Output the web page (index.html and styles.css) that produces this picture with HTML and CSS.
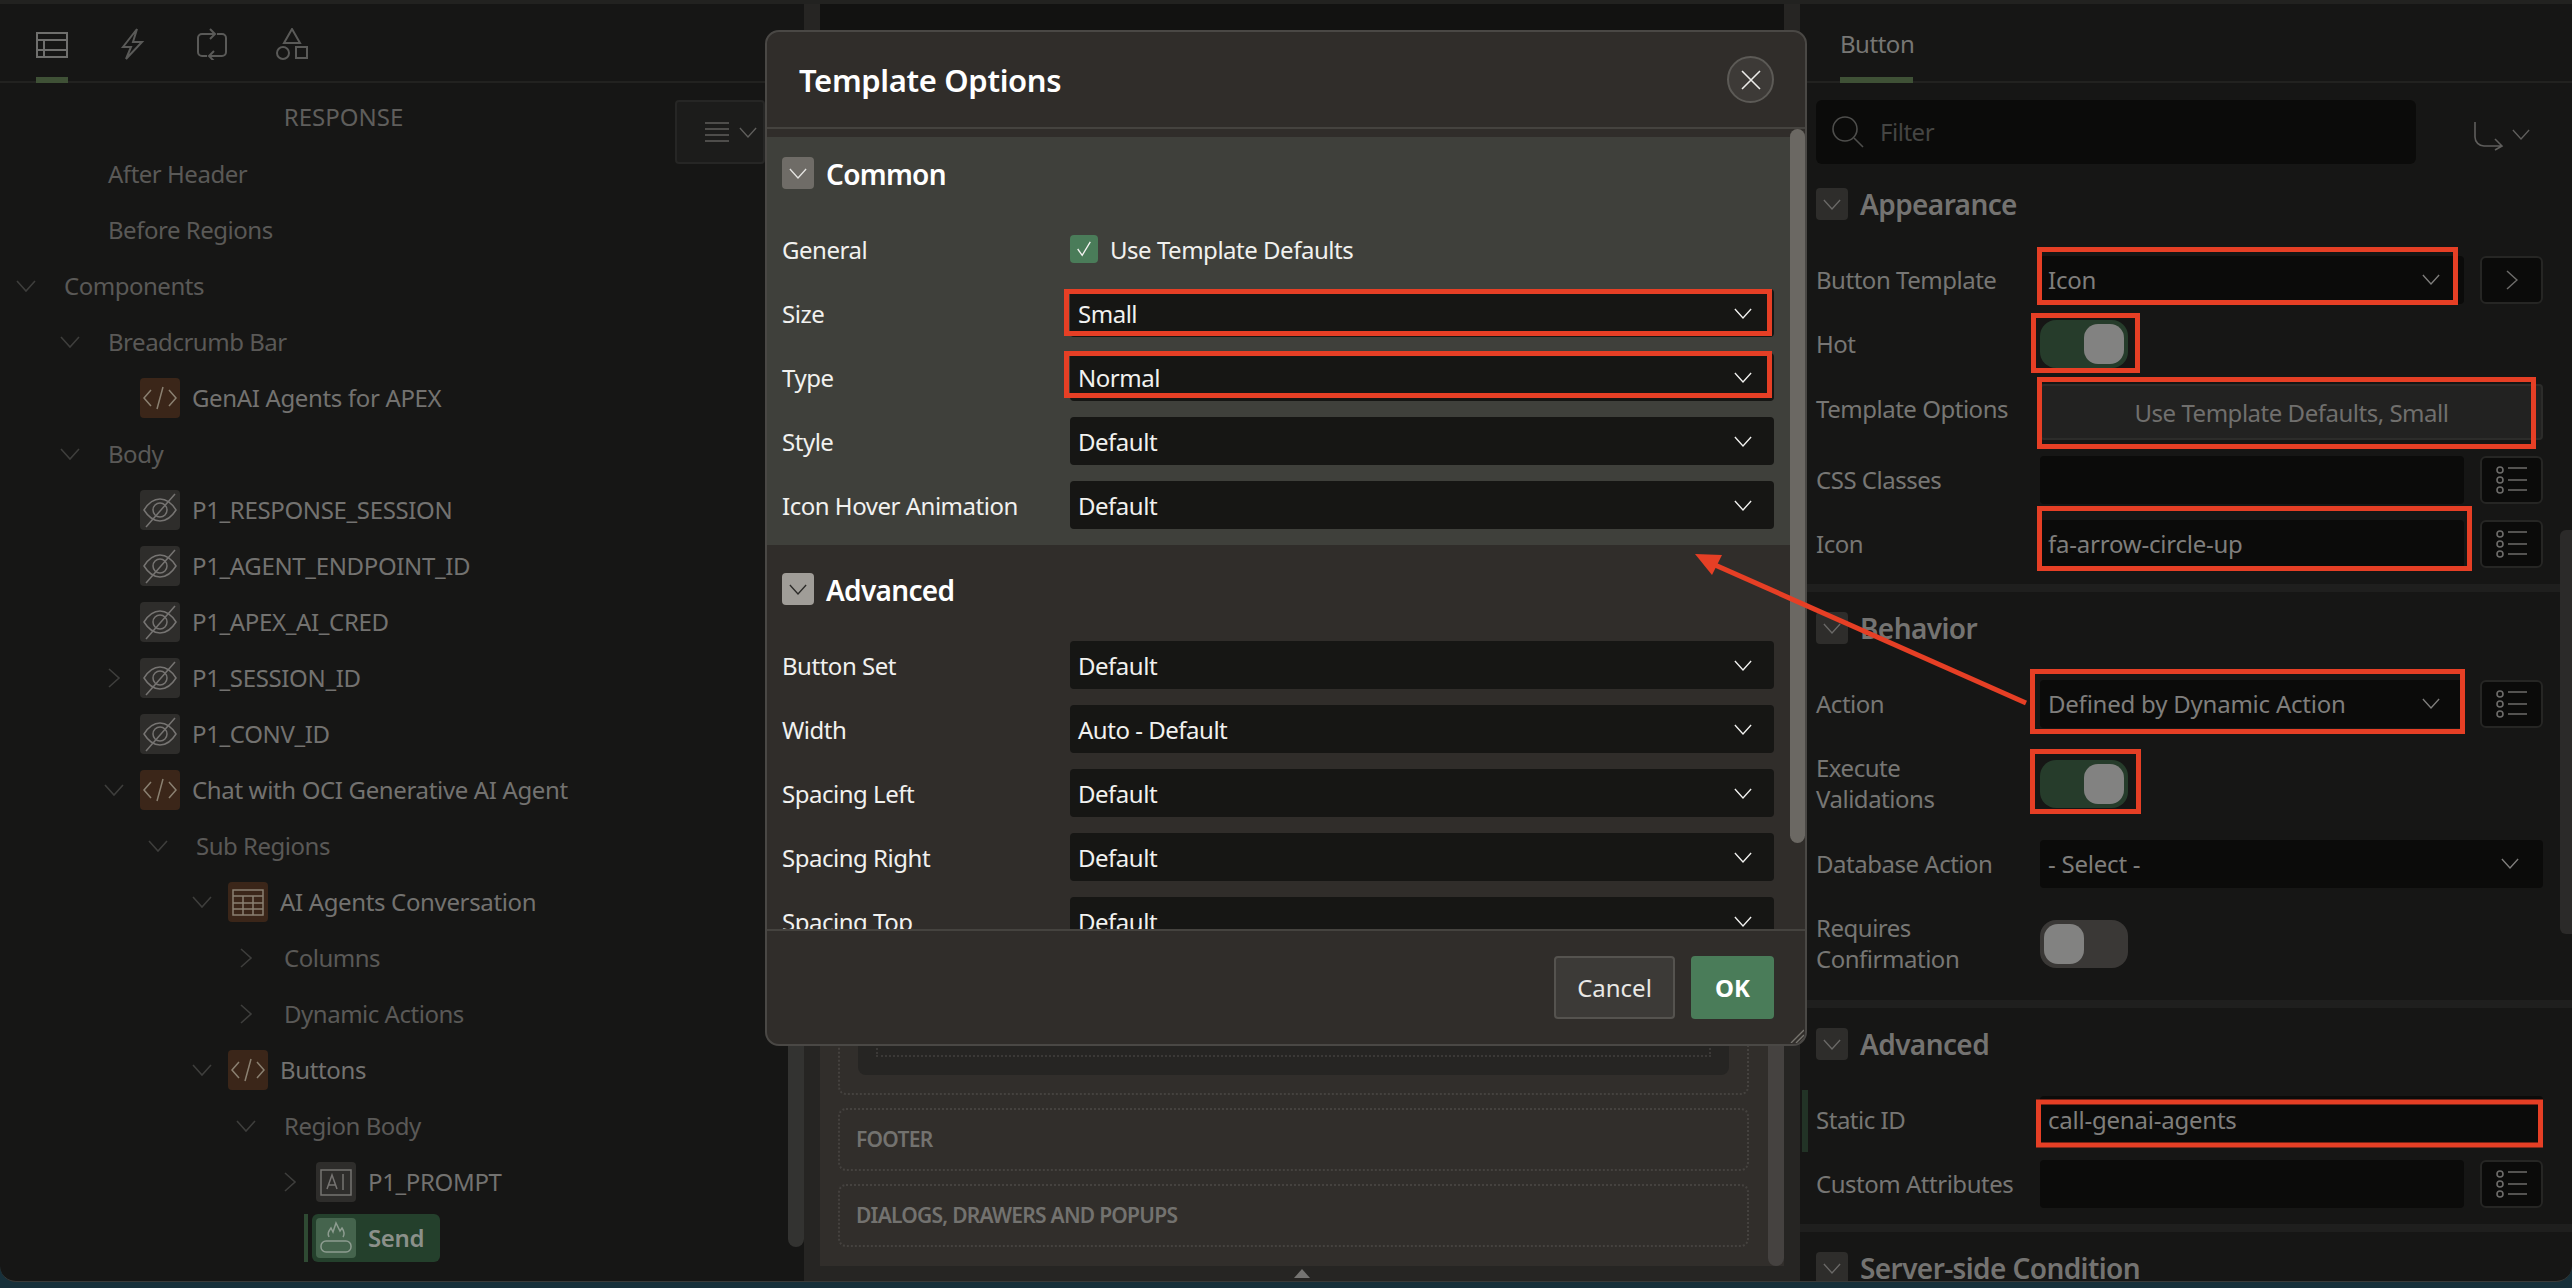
FILE: index.html
```html
<!DOCTYPE html>
<html lang="en">
<head>
    <meta charset="UTF-8">
    <meta name="viewport" content="width=device-width, initial-scale=1.0">
    <title>Template Options</title>
    <link rel="stylesheet" href="styles.css">
</head>
<body>
    <svg class="defs" width="0" height="0">
        <symbol id="chev-d" viewBox="0 0 20 12"><path d="M1 1l9 10 9-10"/></symbol>
        <symbol id="chev-r" viewBox="0 0 12 20"><path d="M1 1l10 9-10 9"/></symbol>
        <symbol id="i-code" viewBox="0 0 40 40"><path d="M11 12l-7 8 7 8M29 12l7 8-7 8M23 9l-6 22"/></symbol>
        <symbol id="i-eye" viewBox="0 0 40 40"><path d="M4 20c5-8 10-11 16-11s11 3 16 11c-5 8-10 11-16 11S9 28 4 20z"/><circle cx="20" cy="20" r="7"/><path d="M6 37L35 4"/></symbol>
        <symbol id="i-table" viewBox="0 0 40 40"><path d="M5 8h30v25H5zM5 14h30M5 21h30M5 27h30M15 14v19M25 14v19"/></symbol>
        <symbol id="i-prompt" viewBox="0 0 40 40"><path d="M5 8h30v25H5zM11 27l5-14 5 14M13 23h6M27 12v16"/></symbol>
        <symbol id="i-send" viewBox="0 0 40 40"><rect x="5" y="23" width="30" height="11" rx="5"/><path d="M13 19c-2-4 0-6 2-9l2 4 3-9 4 8 2-3c2 3 3 6 1 9"/></symbol>
        <symbol id="i-list" viewBox="0 0 32 32"><circle cx="4" cy="6" r="3"/><circle cx="4" cy="16" r="3"/><circle cx="4" cy="26" r="3"/><path d="M12 4h19M12 16h19M12 26h19"/></symbol>
    </svg>

    <div class="window">
        <!-- tree -->
        <div class="left">
            <div class="tabs">
                <div class="tab active">
                    <svg class="tab-icon" viewBox="0 0 32 32"><path d="M1 5h30v24H1zM1 12h30M1 22h30M8 12v17"/></svg>
                </div>
                <div class="tab">
                    <svg class="tab-icon" viewBox="0 0 32 32"><path d="M21 1L7 19h8l-5 12 16-17h-9z"/></svg>
                </div>
                <div class="tab">
                    <svg class="tab-icon" viewBox="0 0 32 32"><path d="M11 28H6a4 4 0 0 1-4-4V10a4 4 0 0 1 4-4h12M14 1l5 5-5 5M21 6h5a4 4 0 0 1 4 4v14a4 4 0 0 1-4 4H14M18 23l-5 5 5 5"/></svg>
                </div>
                <div class="tab">
                    <svg class="tab-icon" viewBox="0 0 32 32"><path d="M16 1l8 14H8zM20 19h11v11H20z"/><circle cx="7" cy="25" r="6"/></svg>
                </div>
            </div>
            <div class="tree">
                <div class="tree-head">
                    <span class="tree-title">RESPONSE</span>
                    <div class="menu-btn">
                        <svg class="menu-lines" viewBox="0 0 24 24"><path d="M0 3h24M0 9h24M0 15h24M0 21h24"/></svg>
                        <svg class="chev"><use href="#chev-d"/></svg>
                    </div>
                </div>
                <div class="row lvl-1"><span class="caret"></span><span class="group">After Header</span></div>
                <div class="row lvl-1"><span class="caret"></span><span class="group">Before Regions</span></div>
                <div class="row lvl-0"><svg class="caret"><use href="#chev-d"/></svg><span class="group">Components</span></div>
                <div class="row lvl-1"><svg class="caret"><use href="#chev-d"/></svg><span class="group">Breadcrumb Bar</span></div>
                <div class="row lvl-2"><span class="caret"></span><span class="node-icon code"><svg><use href="#i-code"/></svg></span><span class="name">GenAI Agents for APEX</span></div>
                <div class="row lvl-1"><svg class="caret"><use href="#chev-d"/></svg><span class="group">Body</span></div>
                <div class="row lvl-2"><span class="caret"></span><span class="node-icon"><svg><use href="#i-eye"/></svg></span><span class="name">P1_RESPONSE_SESSION</span></div>
                <div class="row lvl-2"><span class="caret"></span><span class="node-icon"><svg><use href="#i-eye"/></svg></span><span class="name">P1_AGENT_ENDPOINT_ID</span></div>
                <div class="row lvl-2"><span class="caret"></span><span class="node-icon"><svg><use href="#i-eye"/></svg></span><span class="name">P1_APEX_AI_CRED</span></div>
                <div class="row lvl-2"><svg class="caret side"><use href="#chev-r"/></svg><span class="node-icon"><svg><use href="#i-eye"/></svg></span><span class="name">P1_SESSION_ID</span></div>
                <div class="row lvl-2"><span class="caret"></span><span class="node-icon"><svg><use href="#i-eye"/></svg></span><span class="name">P1_CONV_ID</span></div>
                <div class="row lvl-2"><svg class="caret"><use href="#chev-d"/></svg><span class="node-icon code"><svg><use href="#i-code"/></svg></span><span class="name">Chat with OCI Generative AI Agent</span></div>
                <div class="row lvl-3"><svg class="caret"><use href="#chev-d"/></svg><span class="group">Sub Regions</span></div>
                <div class="row lvl-4"><svg class="caret"><use href="#chev-d"/></svg><span class="node-icon code"><svg><use href="#i-table"/></svg></span><span class="name">AI Agents Conversation</span></div>
                <div class="row lvl-5"><svg class="caret side"><use href="#chev-r"/></svg><span class="group">Columns</span></div>
                <div class="row lvl-5"><svg class="caret side"><use href="#chev-r"/></svg><span class="group">Dynamic Actions</span></div>
                <div class="row lvl-4"><svg class="caret"><use href="#chev-d"/></svg><span class="node-icon code"><svg><use href="#i-code"/></svg></span><span class="name">Buttons</span></div>
                <div class="row lvl-5"><svg class="caret"><use href="#chev-d"/></svg><span class="group">Region Body</span></div>
                <div class="row lvl-6"><svg class="caret side"><use href="#chev-r"/></svg><span class="node-icon"><svg><use href="#i-prompt"/></svg></span><span class="name">P1_PROMPT</span></div>
                <div class="row lvl-6"><span class="caret"></span><span class="selected"><span class="node-icon send"><svg><use href="#i-send"/></svg></span><span class="name">Send</span></span></div>
            </div>
            <div class="left-scroll"></div>
        </div>

        <!-- page layout behind the dialog -->
        <div class="center">
            <div class="canvas">
                <div class="canvas-top"></div>
                <div class="slot slot-body"><div class="slot-dark"><div class="slot-inner"></div></div></div>
                <div class="slot">FOOTER</div>
                <div class="slot">DIALOGS, DRAWERS AND POPUPS</div>
                <div class="canvas-scroll"></div>
            </div>
            <div class="grip"><span class="grip-arrow"></span></div>
        </div>

        <!-- property editor -->
        <div class="right">
            <div class="tabs right-tabs">
                <div class="tab-text">Button</div>
            </div>
            <div class="toolbar">
                <div class="filter">
                    <svg class="search" viewBox="0 0 32 32"><circle cx="13" cy="13" r="12"/><path d="M22 22l9 9"/></svg>
                    <span class="filter-text">Filter</span>
                </div>
                <div class="go-to">
                    <svg class="go-icon" viewBox="0 0 30 30"><path d="M1 1v15a9 9 0 0 0 9 9h18M21 18l7 7-7 4"/></svg>
                    <svg class="chev"><use href="#chev-d"/></svg>
                </div>
            </div>

            <div class="section">
                <div class="section-head"><span class="fold"><svg class="chev"><use href="#chev-d"/></svg></span><span>Appearance</span></div>
                <div class="prop-grid">
                    <div class="prop">
                        <span class="prop-label">Button Template</span>
                        <div class="field">Icon<svg class="chev"><use href="#chev-d"/></svg></div>
                        <div class="side-btn"><svg class="chev-right"><use href="#chev-r"/></svg></div>
                    </div>
                    <div class="prop">
                        <span class="prop-label">Hot</span>
                        <div class="toggle on"><span class="knob"></span></div>
                    </div>
                    <div class="prop">
                        <span class="prop-label options-label">Template Options</span>
                        <div class="options-btn">Use Template Defaults, Small</div>
                    </div>
                    <div class="prop">
                        <span class="prop-label">CSS Classes</span>
                        <div class="field"></div>
                        <div class="side-btn"><svg class="list"><use href="#i-list"/></svg></div>
                    </div>
                    <div class="prop">
                        <span class="prop-label">Icon</span>
                        <div class="field">fa-arrow-circle-up</div>
                        <div class="side-btn"><svg class="list"><use href="#i-list"/></svg></div>
                    </div>
                </div>
            </div>

            <div class="section">
                <div class="section-head"><span class="fold"><svg class="chev"><use href="#chev-d"/></svg></span><span>Behavior</span></div>
                <div class="prop-grid">
                    <div class="prop">
                        <span class="prop-label">Action</span>
                        <div class="field">Defined by Dynamic Action<svg class="chev"><use href="#chev-d"/></svg></div>
                        <div class="side-btn"><svg class="list"><use href="#i-list"/></svg></div>
                    </div>
                    <div class="prop tall">
                        <span class="prop-label">Execute<br>Validations</span>
                        <div class="toggle on"><span class="knob"></span></div>
                    </div>
                    <div class="prop">
                        <span class="prop-label">Database Action</span>
                        <div class="field wide">- Select -<svg class="chev"><use href="#chev-d"/></svg></div>
                    </div>
                    <div class="prop tall">
                        <span class="prop-label">Requires<br>Confirmation</span>
                        <div class="toggle"><span class="knob"></span></div>
                    </div>
                </div>
            </div>

            <div class="section">
                <div class="section-head"><span class="fold"><svg class="chev"><use href="#chev-d"/></svg></span><span>Advanced</span></div>
                <div class="prop-grid">
                    <div class="prop changed">
                        <span class="prop-label">Static ID</span>
                        <div class="field wide">call-genai-agents</div>
                    </div>
                    <div class="prop">
                        <span class="prop-label">Custom Attributes</span>
                        <div class="field"></div>
                        <div class="side-btn"><svg class="list"><use href="#i-list"/></svg></div>
                    </div>
                </div>
            </div>

            <div class="section">
                <div class="section-head"><span class="fold"><svg class="chev"><use href="#chev-d"/></svg></span><span>Server-side Condition</span></div>
            </div>
            <div class="right-scroll"></div>
        </div>
    </div>

    <!-- dialog -->
    <div class="modal">
        <div class="modal-head">
            <h1>Template Options</h1>
            <div class="close">
                <svg viewBox="0 0 20 20"><path d="M1 1l18 18M19 1L1 19"/></svg>
            </div>
        </div>
        <div class="modal-body">
            <div class="opt-section current">
                <div class="opt-head"><span class="fold"><svg class="chev"><use href="#chev-d"/></svg></span><span class="opt-title">Common</span></div>
                <div class="opt-rows">
                    <div class="opt">
                        <span>General</span>
                        <div class="check-row"><span class="check"><svg viewBox="0 0 20 20"><path d="M3 10l5 7L17 2"/></svg></span>Use Template Defaults</div>
                    </div>
                    <div class="opt"><span>Size</span><div class="select">Small<svg class="chev"><use href="#chev-d"/></svg></div></div>
                    <div class="opt"><span>Type</span><div class="select">Normal<svg class="chev"><use href="#chev-d"/></svg></div></div>
                    <div class="opt"><span>Style</span><div class="select">Default<svg class="chev"><use href="#chev-d"/></svg></div></div>
                    <div class="opt"><span>Icon Hover Animation</span><div class="select">Default<svg class="chev"><use href="#chev-d"/></svg></div></div>
                </div>
            </div>
            <div class="opt-section second">
                <div class="opt-head"><span class="fold light"><svg class="chev"><use href="#chev-d"/></svg></span><span class="opt-title">Advanced</span></div>
                <div class="opt-rows">
                    <div class="opt"><span>Button Set</span><div class="select">Default<svg class="chev"><use href="#chev-d"/></svg></div></div>
                    <div class="opt"><span>Width</span><div class="select">Auto - Default<svg class="chev"><use href="#chev-d"/></svg></div></div>
                    <div class="opt"><span>Spacing Left</span><div class="select">Default<svg class="chev"><use href="#chev-d"/></svg></div></div>
                    <div class="opt"><span>Spacing Right</span><div class="select">Default<svg class="chev"><use href="#chev-d"/></svg></div></div>
                    <div class="opt"><span>Spacing Top</span><div class="select">Default<svg class="chev"><use href="#chev-d"/></svg></div></div>
                </div>
            </div>
            <div class="modal-scroll"></div>
        </div>
        <div class="modal-foot">
            <button class="btn">Cancel</button>
            <button class="btn ok">OK</button>
            <svg class="resize" viewBox="0 0 14 14"><path d="M14 1L1 14M14 6l-8 8M14 10l-4 4"/></svg>
        </div>
    </div>

    <!-- red annotations drawn on the screenshot -->
    <svg class="marks" viewBox="0 0 2572 1288">
        <rect x="1066.5" y="291.5" width="703" height="42"/>
        <rect x="1066.5" y="353.5" width="703" height="42"/>
        <rect x="2039.5" y="249.5" width="416" height="53"/>
        <rect x="2033.5" y="315.5" width="104" height="55"/>
        <rect x="2039.5" y="379.5" width="494" height="67"/>
        <rect x="2039.5" y="508.5" width="430" height="60"/>
        <rect x="2032.5" y="671.5" width="430" height="60"/>
        <rect x="2032.5" y="751.5" width="106" height="60"/>
        <rect x="2038.5" y="1102" width="502" height="43"/>
        <path class="line" d="M2026 703L1706 561"/>
        <path class="head" d="M1695 554l27 1-10 20z"/>
    </svg>
</body>
</html>
```

FILE: styles.css
```css
* {
    box-sizing: border-box;
}
body {
    margin: 0;
    height: 1288px;
    overflow: hidden;
    position: relative;
    background-color: #17303a;
    font-family: "Noto Sans", Arial, sans-serif;
    font-size: 24px;
    letter-spacing: -0.48px;
    color: #777674;
}
svg {
    fill: none;
    stroke: currentColor;
    stroke-width: 2;
    display: block;
}
.defs {
    position: absolute;
}
.window {
    display: flex;
    height: 1282px;
    background: #161615;
    border-top: 4px solid #222220;
    border-bottom: 1px solid #3a3a38;
    border-radius: 0 0 16px 16px;
    overflow: hidden;
}
.chev {
    width: 18px;
    height: 11px;
    flex: none;
    stroke-width: 1.5;
}

/* left panel */
.left {
    width: 804px;
    flex: none;
    position: relative;
}
.tabs {
    height: 79px;
    display: flex;
    border-bottom: 2px solid #222220;
    padding-left: 36px;
    gap: 48px;
}
.tab {
    width: 32px;
    padding-top: 24px;
    color: #5a5a58;
}
.tab.active {
    height: 79px;
    color: #6f6f6d;
    border-bottom: 6px solid #3f5136;
}
.tab-icon {
    width: 32px;
    height: 32px;
}
.tree {
    padding-top: 7px;
}
.tree-head {
    height: 56px;
    display: flex;
    padding-right: 39px;
}
.tree-title {
    flex: 1;
    text-align: center;
    line-height: 54px;
    padding-left: 12px;
    letter-spacing: 0;
    color: #5f5e5c;
}
.menu-btn {
    width: 90px;
    height: 64px;
    margin-top: 10px;
    display: flex;
    align-items: center;
    gap: 10px;
    padding-left: 28px;
    background: #1c1c1b;
    border: 2px solid #262625;
    border-radius: 4px;
    color: #5f5e5c;
    flex: none;
}
.menu-lines {
    width: 24px;
    height: 24px;
    flex: none;
    stroke-width: 1.6;
}
.row {
    height: 56px;
    display: flex;
    align-items: center;
}
.lvl-0 { padding-left: 16px; }
.lvl-1 { padding-left: 60px; }
.lvl-2 { padding-left: 104px; }
.lvl-3 { padding-left: 148px; }
.lvl-4 { padding-left: 192px; }
.lvl-5 { padding-left: 236px; }
.lvl-6 { padding-left: 280px; }
.caret {
    width: 20px;
    height: 12px;
    flex: none;
    margin-right: 16px;
    color: #3e3e3c;
    stroke-width: 1.6;
}
.caret.side {
    height: 20px;
}
.group {
    margin: 0 0 2px 12px;
    color: #5a5957;
}
.name {
    margin-bottom: 2px;
    letter-spacing: -0.35px;
    color: #737270;
}
.node-icon {
    width: 40px;
    height: 40px;
    flex: none;
    margin-right: 12px;
    border-radius: 4px;
    background: #2e2d2b;
    color: #767472;
}
.node-icon svg {
    width: 40px;
    height: 40px;
    stroke-width: 1.5;
}
.node-icon.code {
    background: #3b2619;
    color: #8a8071;
}
.selected {
    height: 48px;
    width: 128px;
    margin-left: -4px;
    padding-left: 4px;
    display: flex;
    align-items: center;
    background: #24402c;
    border-radius: 6px;
    position: relative;
}
.selected::before {
    content: "";
    position: absolute;
    left: -8px;
    top: 0;
    bottom: 0;
    width: 4px;
    background: #2f4a33;
}
.selected .name {
    font-weight: 600;
    color: #8b908a;
}
.node-icon.send {
    background: #45644d;
    color: #8d9c90;
}
.left-scroll {
    position: absolute;
    right: 0;
    top: 640px;
    bottom: 34px;
    width: 16px;
    background: #333331;
    border-radius: 8px;
}

/* center */
.center {
    width: 996px;
    flex: none;
    display: flex;
    flex-direction: column;
    background: #262523;
    padding: 0 16px 0 16px;
}
.canvas {
    flex: 1;
    position: relative;
    display: flex;
    flex-direction: column;
    justify-content: flex-end;
    gap: 13px;
    padding: 0 35px 19px 18px;
    background: #312e2b;
}
.canvas-top {
    position: absolute;
    left: 0;
    right: 0;
    top: 0;
    height: 300px;
    background: #121211;
}
.slot {
    height: 63px;
    padding: 0 0 2px 16px;
    display: flex;
    align-items: center;
    border: 2px dotted #45423f;
    border-radius: 8px;
    font-size: 21px;
    font-weight: 600;
    letter-spacing: -0.75px;
    color: #73726f;
}
.slot-body {
    height: 200px;
    padding: 0 18px 18px;
    align-items: flex-end;
}
.slot-dark {
    flex: 1;
    height: 100%;
    padding: 0 18px 18px;
    background: #262523;
    border-radius: 0 0 8px 8px;
}
.slot-inner {
    height: 100%;
    border: 2px dotted #3b3937;
}
.canvas-scroll {
    position: absolute;
    right: 0;
    top: 300px;
    bottom: 0;
    width: 16px;
    background: #454240;
    border-radius: 8px;
}
.grip {
    height: 15px;
    flex: none;
    display: flex;
    align-items: center;
    justify-content: center;
}
.grip-arrow {
    border-left: 8px solid transparent;
    border-right: 8px solid transparent;
    border-bottom: 9px solid #757472;
}

/* right panel */
.right {
    flex: 1;
    min-width: 0;
    position: relative;
    overflow: hidden;
}
.right-tabs {
    padding-left: 40px;
}
.tab-text {
    width: 73px;
    height: 79px;
    line-height: 80px;
    text-align: center;
    color: #777674;
    border-bottom: 6px solid #3f5136;
}
.toolbar {
    height: 85px;
    padding: 17px 0 0 16px;
    display: flex;
}
.filter {
    width: 600px;
    height: 64px;
    display: flex;
    align-items: center;
    gap: 16px;
    padding-left: 16px;
    background: #0b0b0a;
    border-radius: 6px;
    color: #454543;
}
.filter-text {
    margin-bottom: 2px;
}
.search {
    width: 32px;
    height: 32px;
    color: #4e4e4c;
    stroke-width: 1.6;
}
.go-to {
    display: flex;
    align-items: center;
    gap: 8px;
    padding-left: 58px;
    color: #5f5e5c;
}
.go-icon {
    width: 30px;
    height: 30px;
    margin-top: 4px;
    stroke-width: 1.6;
}
.section {
    padding: 20px 0 16px 16px;
    border-bottom: 8px solid #1f1f1e;
}
.section-head {
    height: 32px;
    display: flex;
    align-items: center;
    gap: 12px;
    font-size: 28px;
    font-weight: 600;
    letter-spacing: -0.6px;
    color: #747371;
}
.fold {
    width: 32px;
    height: 32px;
    display: flex;
    align-items: center;
    justify-content: center;
    background: #2e2d2b;
    border-radius: 4px;
    color: #6a6967;
}
.prop-grid {
    margin-top: 36px;
    display: flex;
    flex-direction: column;
    gap: 16px;
}
.prop {
    display: flex;
    align-items: center;
    min-height: 48px;
    position: relative;
}
.prop.tall {
    min-height: 80px;
}
.prop.changed::before {
    content: "";
    position: absolute;
    left: -14px;
    top: -6px;
    bottom: -8px;
    width: 6px;
    background: #223326;
}
.prop-label {
    width: 224px;
    flex: none;
    line-height: 31px;
    margin-bottom: 2px;
    color: #777674;
}
.options-label {
    margin-bottom: 8px;
}
.field {
    width: 424px;
    height: 48px;
    display: flex;
    align-items: center;
    justify-content: space-between;
    padding: 0 24px 2px 8px;
    background: #0b0b0a;
    border-radius: 4px;
    letter-spacing: -0.22px;
    color: #7f7e7c;
}
.field.wide {
    width: 503px;
}
.side-btn {
    width: 63px;
    height: 48px;
    margin-left: 16px;
    display: flex;
    align-items: center;
    justify-content: center;
    background: #0b0b0a;
    border: 2px solid #262624;
    border-radius: 6px;
    color: #6d6c6a;
}
.list {
    width: 32px;
    height: 32px;
    stroke-width: 1.6;
}
.chev-right {
    width: 12px;
    height: 20px;
    stroke-width: 1.5;
}
.toggle {
    width: 88px;
    height: 48px;
    padding: 4px;
    background: #3a3836;
    border-radius: 16px;
}
.toggle.on {
    background: #263c2b;
    padding-left: 44px;
}
.knob {
    display: block;
    width: 40px;
    height: 40px;
    background: #828281;
    border-radius: 14px;
}
.options-btn {
    width: 503px;
    height: 56px;
    text-align: center;
    line-height: 53px;
    background: #222221;
    border: 2px solid #2c2c2a;
    border-radius: 4px;
    color: #706f6d;
}
.right-scroll {
    position: absolute;
    right: 0;
    top: 526px;
    width: 12px;
    height: 404px;
    background: #2b2a29;
    border-radius: 6px 0 0 6px;
}

/* dialog */
.modal {
    position: absolute;
    left: 765px;
    top: 30px;
    width: 1042px;
    height: 1016px;
    display: flex;
    flex-direction: column;
    background: #302d2a;
    border: 2px solid #4a4845;
    border-radius: 14px;
    overflow: hidden;
    color: #f1f1ef;
}
.modal-head {
    height: 97px;
    flex: none;
    display: flex;
    align-items: center;
    justify-content: space-between;
    padding: 0 31px 0 32px;
    border-bottom: 2px solid #45433f;
}
.modal-head h1 {
    margin: 0;
    font-size: 31px;
    font-weight: 600;
    letter-spacing: -0.35px;
    color: #fff;
}
.close {
    width: 47px;
    height: 47px;
    display: flex;
    align-items: center;
    justify-content: center;
    background: #3d3a37;
    border: 2px solid #5c5a56;
    border-radius: 50%;
    color: #ecebe9;
}
.close svg {
    width: 20px;
    height: 20px;
    stroke-width: 1.6;
}
.modal-body {
    flex: 1;
    min-height: 0;
    position: relative;
    overflow: hidden;
    padding-top: 8px;
}
.opt-section {
    width: 1024px;
    padding: 20px 17px 16px 15px;
}
.opt-section.current {
    background: #3f403b;
}
.opt-section.second {
    padding-top: 28px;
}
.opt-head {
    height: 32px;
    display: flex;
    align-items: center;
    gap: 12px;
    font-size: 28px;
    font-weight: 600;
    letter-spacing: -0.7px;
    color: #fff;
}
.opt-title {
    padding-top: 2px;
}
.modal .fold {
    background: #6f6c67;
    color: #e4e3e0;
}
.modal .fold.light {
    background: #a09d98;
    color: #2c2b29;
}
.opt-rows {
    margin-top: 36px;
    display: flex;
    flex-direction: column;
    gap: 16px;
}
.opt {
    display: flex;
    align-items: center;
    min-height: 48px;
}
.opt > span {
    width: 288px;
    flex: none;
}
.check-row {
    display: flex;
    align-items: center;
    gap: 12px;
}
.check {
    width: 28px;
    height: 28px;
    display: flex;
    align-items: center;
    justify-content: center;
    background: #4a7c59;
    border-radius: 4px;
    color: #f2f2f0;
}
.check svg {
    width: 18px;
    height: 18px;
    stroke-width: 1.5;
}
.select {
    flex: 1;
    height: 48px;
    display: flex;
    align-items: center;
    justify-content: space-between;
    padding: 0 22px 0 8px;
    background: #161614;
    border-radius: 4px;
}
.modal-scroll {
    position: absolute;
    right: 0;
    top: 0;
    width: 15px;
    height: 714px;
    background: #6b6863;
    border-radius: 8px;
}
.modal-foot {
    height: 115px;
    flex: none;
    display: flex;
    justify-content: flex-end;
    gap: 16px;
    padding: 25px 31px 0 0;
    border-top: 2px solid #45433f;
    position: relative;
}
.btn {
    height: 63px;
    font: inherit;
    color: #e9e8e6;
    background: #3c3a37;
    border: 2px solid #55534f;
    border-radius: 4px;
    width: 121px;
}
.btn.ok {
    width: 83px;
    font-weight: 700;
    color: #fff;
    background: #4a7c59;
    border-color: #4a7c59;
}
.resize {
    position: absolute;
    right: 1px;
    bottom: 1px;
    width: 14px;
    height: 14px;
    color: #77756f;
    stroke-width: 1.4;
}

/* annotations */
.marks {
    position: absolute;
    left: 0;
    top: 0;
    width: 2572px;
    height: 1288px;
    pointer-events: none;
    stroke: #e63f25;
    stroke-width: 5;
}
.marks .head {
    fill: #e63f25;
    stroke: none;
}
```
